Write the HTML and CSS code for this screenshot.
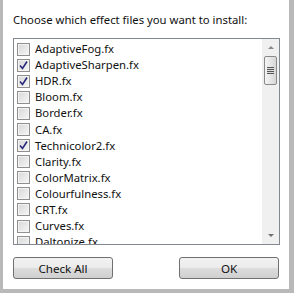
FILE: index.html
```html
<!DOCTYPE html>
<html lang="en">
<head>
  <meta charset="UTF-8">
  <title>Install Effects</title>
  <link rel="stylesheet" href="styles.css">
</head>
<body>
  <div class="dialog">
    <p class="prompt">Choose which effect files you want to install:</p>
    <div class="list">
      <div class="items" id="items"></div>
      <div class="scrollbar">
        <div class="arrow up"></div>
        <div class="thumb"><span class="grip"></span></div>
        <div class="track"></div>
        <div class="arrow down"></div>
      </div>
    </div>
    <div class="buttons">
      <button class="btn">Check All</button>
      <button class="btn">OK</button>
    </div>
  </div>
  <script>
    const effects = [
      ["AdaptiveFog.fx", false],
      ["AdaptiveSharpen.fx", true],
      ["HDR.fx", true],
      ["Bloom.fx", false],
      ["Border.fx", false],
      ["CA.fx", false],
      ["Technicolor2.fx", true],
      ["Clarity.fx", false],
      ["ColorMatrix.fx", false],
      ["Colourfulness.fx", false],
      ["CRT.fx", false],
      ["Curves.fx", false],
      ["Daltonize.fx", false]
    ];

    const check = '<svg width="9" height="9" viewBox="0 0 9 9"><path d="M1 4.5 L3.5 7.5 L8 0.5" fill="none" stroke="#2a2a7a" stroke-width="1.6"/></svg>';

    let html = "";
    effects.forEach(e => {
      html += `<div class="row"><span class="box">${e[1] ? check : ""}</span><span class="name">${e[0]}</span></div>`;
    });
    document.getElementById("items").innerHTML = html;
  </script>
</body>
</html>
```

FILE: styles.css
```css
html, body { margin: 0; padding: 0; }
body { background: #b9b9b9; width: 294px; height: 293px; font-family: "Noto Sans", "Open Sans", sans-serif; font-size: 11.3px; color: #111; }
.dialog { margin-left: 3px; width: 286px; height: 289px; background: #fff; box-sizing: border-box; padding: 0 9px 0 10px; display: flex; flex-direction: column; }
.prompt { margin: 0; height: 38px; line-height: 40px; white-space: nowrap; }
.list { height: 207px; border: 1px solid #828790; box-sizing: border-box; display: flex; overflow: hidden; }
.items { flex: 1; padding: 2px 0 0 3px; overflow: hidden; }
.row { height: 16.1px; display: flex; align-items: center; }
.box { width: 11px; height: 11px; border: 1px solid #8f8f8f; background: linear-gradient(135deg, #d8d8d8, #f6f6f6); box-shadow: inset 0 0 0 1px #f4f4f4; display: flex; align-items: center; justify-content: center; margin-right: 5px; flex: none; }
.name { line-height: 16px; }
.scrollbar { width: 17px; background: #f0f0f0; display: flex; flex-direction: column; align-items: center; }
.arrow { height: 17px; width: 17px; display: flex; align-items: center; justify-content: center; }
.arrow::after { content: ""; border-left: 3px solid transparent; border-right: 3px solid transparent; }
.up::after { border-bottom: 3px solid #8a8a8a; }
.down::after { border-top: 3px solid #707070; }
.thumb { width: 13px; height: 29px; border: 1px solid #8a8a8a; border-radius: 2px; box-sizing: border-box; background: linear-gradient(90deg, #f4f4f4, #e6e6e6 50%, #d6d6d6); display: flex; align-items: center; justify-content: center; }
.grip { width: 7px; height: 7px; background: repeating-linear-gradient(180deg, #555 0, #555 1px, #ddd 1px, #ddd 2px); }
.track { flex: 1; }
.buttons { display: flex; justify-content: space-between; margin-top: 12px; padding-right: 1px; }
.btn { width: 100px; height: 22px; font-family: inherit; font-size: 11.6px; color: #111; border: 1px solid #707070; border-radius: 3px; background: linear-gradient(180deg, #f2f2f2 0, #ebebeb 50%, #dddddd 50%, #cfcfcf 100%); padding: 0; }
```
